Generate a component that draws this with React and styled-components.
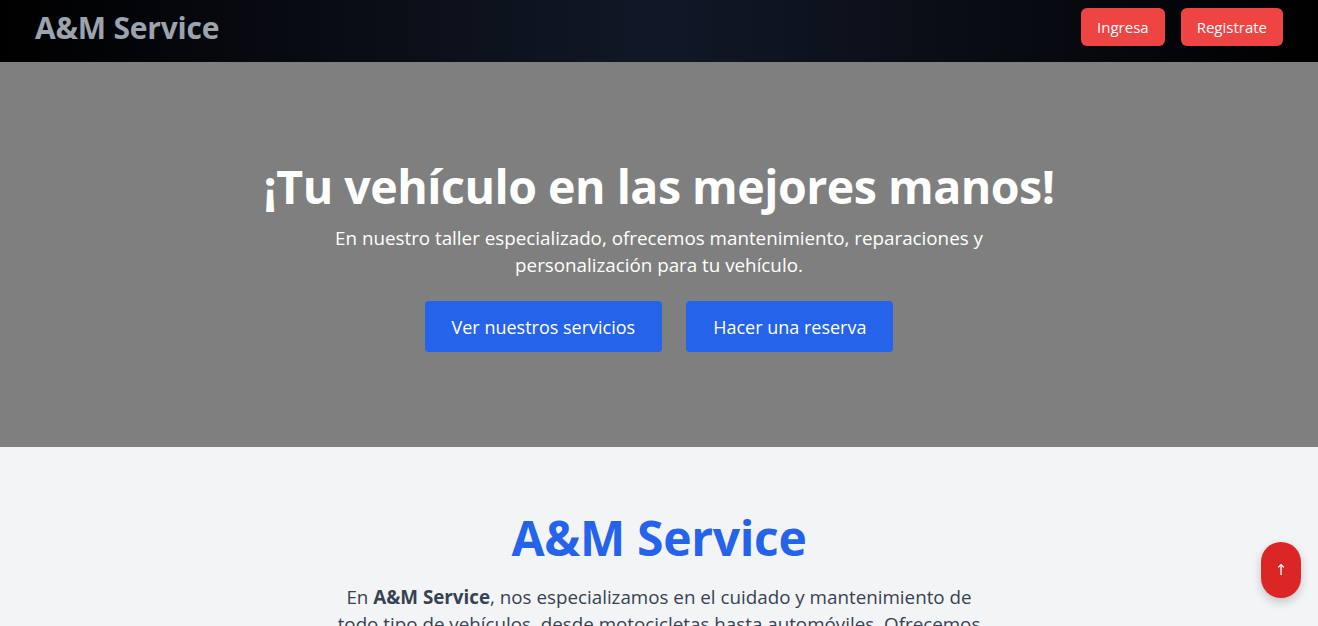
import React from 'react';
import styled, { createGlobalStyle } from 'styled-components';

const GlobalStyle = createGlobalStyle`
	html, body {
		margin: 0;
		padding: 0;
		background: #f3f4f6;
		font-family: "Open Sans", "Noto Sans", sans-serif;
		overflow: hidden;
	}
	* {
		box-sizing: border-box;
	}
`;

const Header = styled.header`
	height: 62px;
	display: flex;
	align-items: center;
	justify-content: space-between;
	padding: 0 35px 0 35px;
	background: linear-gradient(to right, #000000, #111827, #000000);
`;

const Logo = styled.h1`
	margin: 0;
	font-size: 30px;
	line-height: 36px;
	font-weight: 700;
	color: #9ca3af;
	letter-spacing: -0.2px;
	margin-top: -6px;
`;

const Nav = styled.nav`
	display: flex;
	gap: 16px;
	margin-top: -8px;
`;

const NavButton = styled.button`
	height: 38px;
	padding: 0 16px;
	border: none;
	border-radius: 6px;
	background: #ef4444;
	color: #ffffff;
	font-family: inherit;
	font-size: 15px;
	cursor: pointer;
`;

const Hero = styled.section`
	height: 385px;
	background: #7e7f7e;
	display: flex;
	flex-direction: column;
	align-items: center;
	padding-top: 98px;
	color: #ffffff;
	text-align: center;
`;

const HeroTitle = styled.h2`
	margin: 0 0 13px;
	font-size: 46.5px;
	line-height: 52px;
	font-weight: 700;
	letter-spacing: -0.5px;
`;

const HeroText = styled.p`
	margin: 0 0 22px;
	max-width: 680px;
	font-size: 18.8px;
	line-height: 27px;
`;

const Actions = styled.div`
	display: flex;
	gap: 24px;
`;

const HeroButton = styled.button`
	height: 51px;
	padding: 0 27px;
	border: none;
	border-radius: 4px;
	background: #2563eb;
	color: #ffffff;
	font-family: inherit;
	font-size: 18px;
	cursor: pointer;
`;

const About = styled.section`
	padding: 65px 20px 0;
	display: flex;
	flex-direction: column;
	align-items: center;
	text-align: center;
`;

const AboutTitle = styled.h2`
	margin: 0 0 20px;
	font-size: 48px;
	line-height: 52px;
	font-weight: 700;
	color: #2563eb;
	letter-spacing: -0.3px;
`;

const AboutText = styled.p`
	margin: 0;
	max-width: 645px;
	font-size: 18.8px;
	line-height: 27px;
	color: #374151;

	strong {
		font-weight: 700;
	}
`;

const ScrollTop = styled.button`
	position: fixed;
	right: 17px;
	bottom: 28px;
	width: 40px;
	height: 56px;
	border: none;
	border-radius: 20px;
	background: #dc2626;
	color: #ffffff;
	font-family: "DejaVu Sans", sans-serif;
	font-size: 15px;
	box-shadow: 0 4px 10px rgba(0, 0, 0, 0.2);
	cursor: pointer;
`;

export default function App() {
	return (
		<>
			<GlobalStyle />
			<Header>
				<Logo>A&amp;M Service</Logo>
				<Nav>
					<NavButton>Ingresa</NavButton>
					<NavButton>Registrate</NavButton>
				</Nav>
			</Header>
			<Hero>
				<HeroTitle>¡Tu vehículo en las mejores manos!</HeroTitle>
				<HeroText>
					En nuestro taller especializado, ofrecemos mantenimiento, reparaciones y personalización para tu vehículo.
				</HeroText>
				<Actions>
					<HeroButton>Ver nuestros servicios</HeroButton>
					<HeroButton>Hacer una reserva</HeroButton>
				</Actions>
			</Hero>
			<About>
				<AboutTitle>A&amp;M Service</AboutTitle>
				<AboutText>
					En <strong>A&amp;M Service</strong>, nos especializamos en el cuidado y mantenimiento de todo tipo de vehículos, desde motocicletas hasta automóviles. Ofrecemos servicios de calidad con personal capacitado y tecnología de punta.
				</AboutText>
			</About>
			<ScrollTop>↑</ScrollTop>
		</>
	);
}
